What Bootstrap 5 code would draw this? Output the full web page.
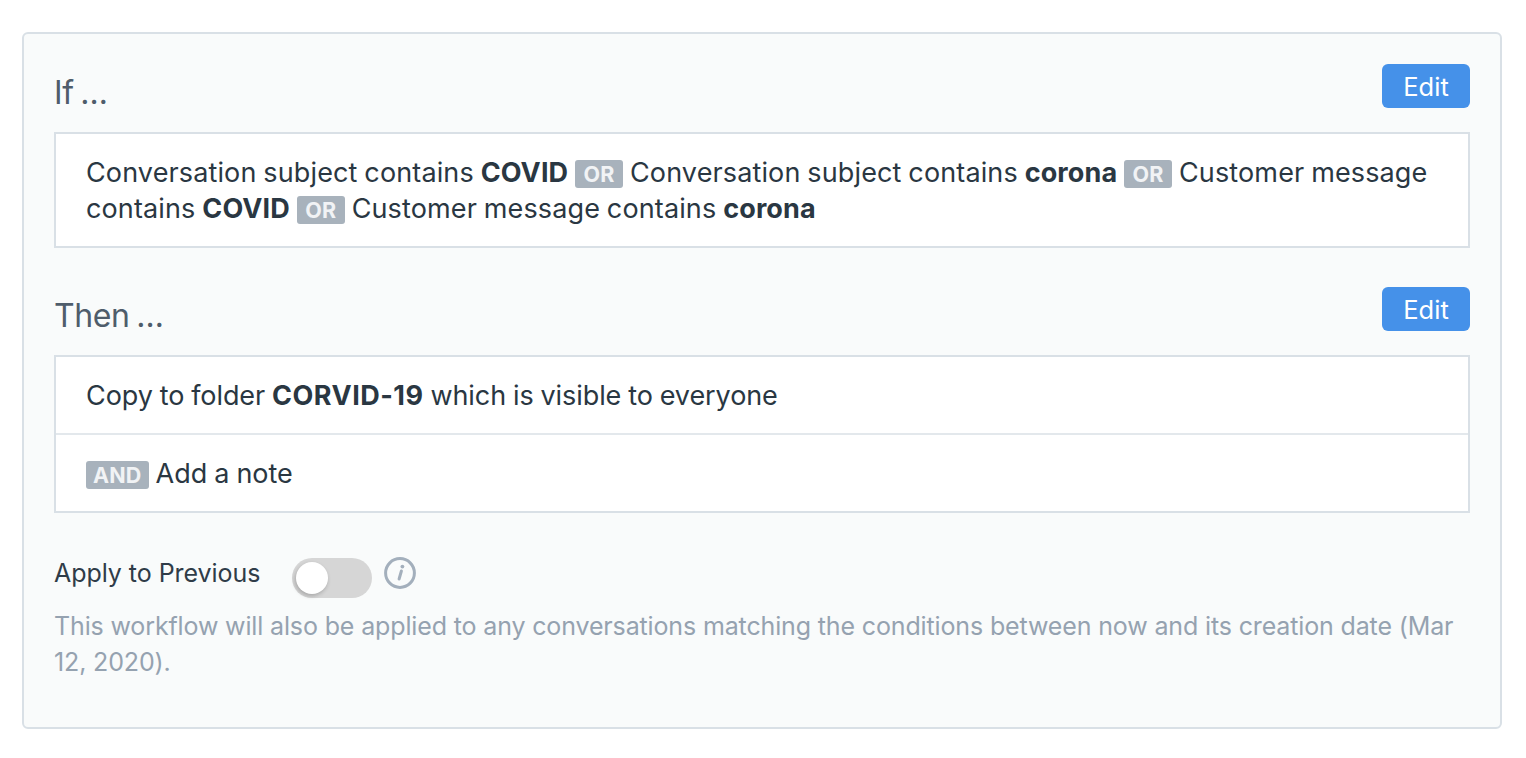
<!DOCTYPE html>
<html lang="en">
<head>
<meta charset="utf-8">
<title>Workflow</title>
<link rel="stylesheet" href="https://cdn.jsdelivr.net/npm/bootstrap@5.3.0/dist/css/bootstrap.min.css">
<style>
body { background:#fff; font-family:Inter,"Liberation Sans",sans-serif; color:#2a3742; }
.wf-page { padding:32px 24px 0 22px; }
.wf-card { background:#f9fbfb; border:2px solid #d9e0e6; border-radius:6px; padding:30px 30px 37px; height:697px; }
.wf-head { height:68px; }
.wf-title { font-size:32px; line-height:58px; color:#4f5d6b; font-weight:400; margin:0; letter-spacing:-.4px; word-spacing:-2px; }
.wf-edit { background:#4591e9; border:0; color:#fff; width:88px; height:44px; border-radius:6px; font-size:25.5px; line-height:46px; padding:0; }
.wf-box { border:2px solid #d9e0e6; border-radius:0; background:#fff; font-size:27px; line-height:36px; color:#2a3742; }
.wf-box .list-group-item { border:0; background:transparent; color:inherit; padding:0 30px; }
.wf-box .list-group-item + .list-group-item { border-top:2px solid #e3e8ec; }
.wf-box .wf-if { padding:21px 30px 19px; height:112px; letter-spacing:.13px; word-spacing:-.9px; }
.wf-box .wf-then-a { height:76px; line-height:78px; word-spacing:-.6px; letter-spacing:-.08px; }
.wf-box .wf-then-a b { letter-spacing:.5px; }
.wf-box .wf-then-b { height:78px; line-height:78px; word-spacing:-.6px; }
.wf-box b { font-weight:700; }
.wf-tag { display:inline-block; background:#a8b2bc; color:#f1f3f5; border-radius:3px; font-size:21.5px; font-weight:700; line-height:28px; height:28px; padding:0 7px; vertical-align:0; letter-spacing:.2px; }
.wf-tag-or { padding:0 8.5px; }
.wf-gap { height:39px; }
.wf-apply { margin-top:45px; height:40px; }
.wf-label { font-size:25px; color:#2f3c48; line-height:32px; width:238px; margin-top:-10px; letter-spacing:-.05px; }
.wf-switch { display:block; width:80px; height:40px; border-radius:20px; background:#d6d6d6; position:relative; }
.wf-switch::after { content:""; position:absolute; left:4px; top:4px; width:32px; height:32px; border-radius:50%; background:#fff; box-shadow:-1px 2px 4px rgba(0,0,0,.22); }
.wf-info { margin-left:12px; margin-top:-10px; display:block; }
.wf-note { font-size:25px; line-height:36px; color:#95a2b0; margin:10px 0 0; letter-spacing:-.14px; }
</style>
</head>
<body>
<div class="wf-page">
  <div class="wf-card">
    <div class="wf-head d-flex justify-content-between align-items-start">
      <h2 class="wf-title">If …</h2>
      <button type="button" class="btn wf-edit">Edit</button>
    </div>
    <div class="wf-box list-group">
      <div class="list-group-item wf-if">Conversation subject contains <b>COVID</b> <span class="wf-tag wf-tag-or">OR</span> Conversation subject contains <b>corona</b> <span class="wf-tag wf-tag-or">OR</span> Customer message contains <b>COVID</b> <span class="wf-tag wf-tag-or">OR</span> Customer message contains <b>corona</b></div>
    </div>
    <div class="wf-gap"></div>
    <div class="wf-head d-flex justify-content-between align-items-start">
      <h2 class="wf-title">Then …</h2>
      <button type="button" class="btn wf-edit">Edit</button>
    </div>
    <div class="wf-box list-group">
      <div class="list-group-item wf-then-a">Copy to folder <b>CORVID-19</b> which is visible to everyone</div>
      <div class="list-group-item wf-then-b"><span class="wf-tag">AND</span> Add a note</div>
    </div>
    <div class="wf-apply d-flex align-items-center">
      <span class="wf-label">Apply to Previous</span>
      <span class="wf-switch"></span>
      <svg class="wf-info" width="32" height="32" viewBox="0 0 32 32" fill="none">
        <circle cx="16" cy="16" r="14.4" stroke="#a3afbc" stroke-width="3"/>
        <path d="M17.4 14l-2.3 8" stroke="#a3afbc" stroke-width="3" stroke-linecap="round"/>
        <circle cx="18.4" cy="9.6" r="1.9" fill="#a3afbc"/>
      </svg>
    </div>
    <p class="wf-note">This workflow will also be applied to any conversations matching the conditions between now and its creation date (Mar 12, 2020).</p>
  </div>
</div>
<script src="https://cdn.jsdelivr.net/npm/bootstrap@5.3.0/dist/js/bootstrap.bundle.min.js"></script>
</body>
</html>
